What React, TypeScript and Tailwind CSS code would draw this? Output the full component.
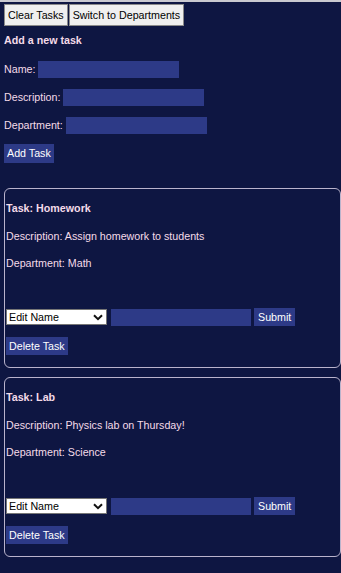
import React from "react"

const font = { fontFamily: '"Liberation Sans", Arial, sans-serif' }

type Task = { name: string; description: string; department: string }

const tasks: Task[] = [
  { name: "Homework", description: "Assign homework to students", department: "Math" },
  { name: "Lab", description: "Physics lab on Thursday!", department: "Science" },
]

function Field({ label, inputWidth }: { label: string; inputWidth: string }) {
  return (
    <div className="flex h-[28px] items-center gap-[3px] pt-[2px]">
      <span>{label}</span>
      <div className={`h-[17px] bg-[#2d3a87] ${inputWidth}`} />
    </div>
  )
}

function TaskCard({ task }: { task: Task }) {
  return (
    <div className="ml-[4px] rounded-[6px] border border-[#b9b3cc] pt-[5px] pb-[12px] pl-[1px]">
      <div className="flex h-[28px] items-center font-bold">Task: {task.name}</div>
      <div className="flex h-[28px] items-center">Description: {task.description}</div>
      <div className="flex h-[27px] items-center">Department: {task.department}</div>
      <div className="h-[31px]" />
      <div className="flex h-[18px] items-center">
        <div className="flex h-[16px] w-[101px] items-center justify-between border border-[#767676] bg-white pl-[2px] pr-[3px] text-black">
          <span>Edit Name</span>
          <svg width="10" height="7" viewBox="0 0 10 7" fill="none">
            <path d="M1 1.2 L5 5.2 L9 1.2" stroke="#111" strokeWidth="2" />
          </svg>
        </div>
        <div className="ml-[4px] h-[17px] w-[140px] bg-[#2d3a87]" />
        <button className="ml-[3px] flex h-[18px] items-center bg-[#2d3a87] px-[4px] text-white">Submit</button>
      </div>
      <div className="mt-[11px] flex h-[18px]">
        <button className="flex items-center bg-[#2d3a87] px-[3px] text-white">Delete Task</button>
      </div>
    </div>
  )
}

export default function App() {
  return (
    <div
      className="min-h-[573px] w-[341px] border-t-2 border-[#c9c9d0] bg-[#0e1642] text-[10.7px] text-[#f4dbe9]"
      style={font}
    >
      <div className="flex gap-[1px] pl-[4px] pt-[2px]">
        <button className="h-[22px] border border-[#8a8a8a] bg-[#efefef] px-[3px] text-black">Clear Tasks</button>
        <button className="h-[22px] border border-[#8a8a8a] bg-[#efefef] px-[3px] text-black">Switch to Departments</button>
      </div>
      <div className="pl-[4px]">
        <div className="flex h-[28px] items-center font-bold">Add a new task</div>
        <Field label="Name:" inputWidth="w-[141px]" />
        <Field label="Description:" inputWidth="w-[141px]" />
        <Field label="Department:" inputWidth="w-[141px]" />
        <div className="mt-[6px] flex h-[19px]">
          <button className="flex items-center bg-[#2d3a87] px-[3px] text-white">Add Task</button>
        </div>
      </div>
      <div className="h-[25px]" />
      <TaskCard task={tasks[0]} />
      <div className="h-[9px]" />
      <TaskCard task={tasks[1]} />
    </div>
  )
}
